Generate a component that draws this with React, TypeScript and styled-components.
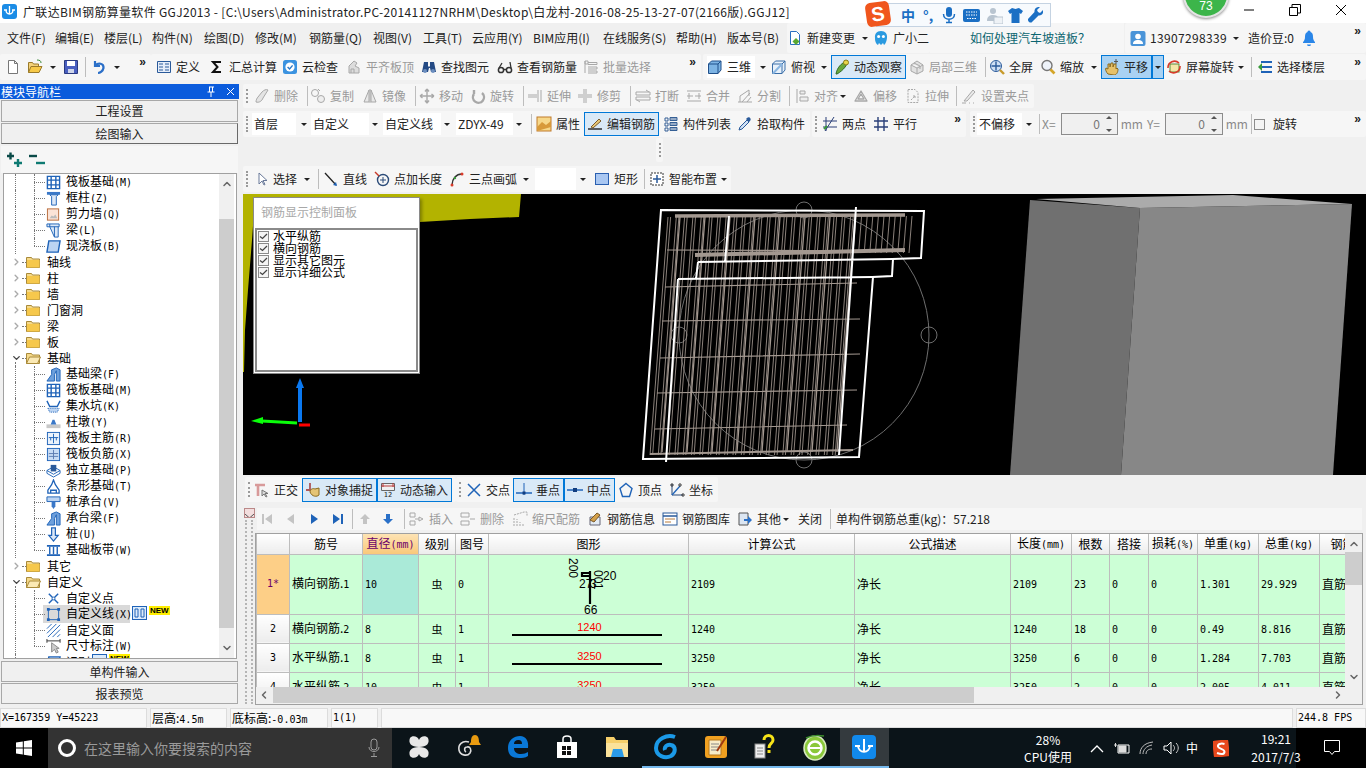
import React from "react";
import styled, { createGlobalStyle } from "styled-components";
import { ChevronUp, ChevronDown, ChevronLeft, ChevronRight } from "lucide-react";

const CJK = `"Noto Sans CJK SC", "Noto Sans", sans-serif`;
const MONO = `"DejaVu Sans Mono", "Liberation Mono", monospace`;

const Global = createGlobalStyle`
  html, body { margin: 0; padding: 0; overflow: hidden; background: #f0f0f0; }
  * { box-sizing: border-box; }
  #root { width: 1366px; height: 768px; }
`;

const B = "#1f63b8";
const G = "#a8a8a8";
const icons: Record<string, React.ReactNode> = {
  new: <path d="M3.5 1.5h6l3 3v10h-9z M9.5 1.5v3h3" fill="#fff" stroke="#777" />,
  open: <><path d="M1.5 13.5v-10h4l1 1.5h5v2" fill="#f4d27a" stroke="#9a7a2a" /><path d="M1.5 13.5l2.5-6h11l-3 6z" fill="#f7c948" stroke="#9a7a2a" /><path d="M10 1c3 0 4 1 4 3" fill="none" stroke="#3a8a3a" /></>,
  save: <><path d="M1.5 1.5h13v13h-13z" fill="#4a5fc0" stroke="#2a3a80" /><path d="M4 2h8v5H4z" fill="#fff" /><path d="M5 10h6v4H5z" fill="#cfd6ea" /></>,
  undo: <path d="M4 2v5h5M4.5 6.5C7 3.5 13 4 12.5 9 12 12 9 14 7 14" fill="none" stroke="#2b6fc8" strokeWidth="2.2" />,
  def: <><path d="M1.5 2.5h13v11h-13z" fill="#e6eefa" stroke="#2a5a9a" /><path d="M3 5h4M3 8h4M3 11h4M9 5h4M9 8h4M9 11h4" stroke="#2a5a9a" /></>,
  sigma: <path d="M12 3H4l4.5 5L4 13h8" fill="none" stroke="#111" strokeWidth="2" />,
  cloud: <><rect x="1" y="1" width="14" height="14" rx="2.5" fill="#3b93e0" /><circle cx="8" cy="8" r="4.6" fill="#fff" /><path d="M5.6 8l2 2 3-3.6" fill="none" stroke="#2a78c8" strokeWidth="1.4" /></>,
  flush: <path d="M3 14V7l5-5 3 2-2 3 4 2v5zM5 14v-4h3v4" fill="#ddd" stroke={G} />,
  find: <><path d="M3 3h4v4l1 1 1-1V3h4l2 10h-5l-1-4-1 0-1 4H1z" fill="#244a84" /><circle cx="4" cy="12" r="2" fill="#6d8fc0" /><circle cx="12" cy="12" r="2" fill="#6d8fc0" /></>,
  view: <><circle cx="4" cy="11" r="2.6" fill="none" stroke="#333" strokeWidth="1.5" /><circle cx="12" cy="11" r="2.6" fill="none" stroke="#333" strokeWidth="1.5" /><path d="M6 10.5h4M2 9l3-5M14 9l-1-6" stroke="#333" strokeWidth="1.3" fill="none" /></>,
  batch: <path d="M2 2h3v3H2zM2 2v12M5 3.5h9v2H5M5 8h9v2H5M5 12h9v2H5" fill="none" stroke={G} />,
  cube: <><path d="M1.5 5l3-3h9.5v9l-3 3.5h-9.5z" fill="#7db4e4" stroke="#1f4f8a" /><path d="M1.5 5H11v9.5M11 5l3-3" fill="none" stroke="#1f4f8a" /></>,
  glass: <><path d="M1.5 5l3-3h9.5v9l-3 3.5h-9.5z" fill="#e8f1fa" stroke="#3a6ea8" /><path d="M1.5 5H11v9.5M11 5l3-3" fill="none" stroke="#3a6ea8" /><path d="M2 14.5L11 5" stroke="#8ab6e2" strokeWidth="2" /></>,
  orbit: <><path d="M2 15C3 9 7 4 13 2c1 3-3 9-10 13z" fill="#6aa83c" stroke="#2f6b25" /><circle cx="12" cy="3.5" r="2.5" fill="#e8d64a" stroke="#8a7a1a" /></>,
  local: <path d="M2 6l6-4 6 4v6l-6 3-6-3zM2 6l6 3 6-3M8 9v6M5 4l6 3v3" fill="#e2e2e2" stroke={G} />,
  full: <><circle cx="7" cy="7" r="5.5" fill="#cfe0f5" stroke="#2a5a9a" /><path d="M7 2.5v9M2.5 7h9" stroke="#2a5a9a" strokeWidth="1.4" /><path d="M11 11l4 4" stroke="#c79a2a" strokeWidth="2.4" /></>,
  zoom: <><circle cx="7" cy="6.5" r="5" fill="#eef3fa" stroke="#777" strokeWidth="1.4" /><path d="M10.5 10.5l4 4" stroke="#d4a528" strokeWidth="2.6" /></>,
  pan: <><path d="M4 15c-2-2-3-5-2-6l2 1V5h2v3l1-4h2v4l1-3h2v5l1-1 1 1c0 4-2 6-4 6z" fill="#e6c16a" stroke="#8a6a20" /><path d="M12 0v5M10 2.5h4" stroke="#555" /></>,
  rotate: <><rect x="4" y="5" width="9" height="8" fill="#f5e6a8" stroke="#5a8a3a" /><path d="M2 9a6.5 6.5 0 0 1 11-5M14 7a6.5 6.5 0 0 1-11 5" fill="none" stroke="#d83a2a" strokeWidth="1.6" /></>,
  floor: <><path d="M4 3h11M4 8h11M4 13h11" stroke="#1f63b8" strokeWidth="2" /><path d="M1 8l4-4v8z" fill="#3a9a3a" /></>,
  docup: <><path d="M3.5 1.5h6l3 3v10h-9z" fill="#fff" stroke="#2a6fc0" /><path d="M9 8l3.5 3.5L9 15l-3.5-3.5z" fill="#5aa830" /></>,
  mascot: <><path d="M8 1c4.5 0 6.5 3 6 7-.3 3-1.5 6-3 7l-1-2-2 2-2-2-1 2C3 14 1.800 11 2 8c-.4-4 1.500-7 6-7z" fill="#2a9ae0" /><circle cx="5.600" cy="6.500" r="1.500" fill="#fff" /><circle cx="10.400" cy="6.500" r="1.500" fill="#fff" /></>,
  user: <><rect x="0.500" y="1" width="15" height="15" rx="2" fill="#4a94d8" /><circle cx="8" cy="6.500" r="2.800" fill="#fff" /><path d="M3 14c0-3 2-4 5-4s5 1 5 4z" fill="#fff" /></>,
  bell: <path d="M8 0.500c1 0 1.500.8 1.500 1.500 2 .8 2.500 2.500 2.500 5 0 2.500 1 4 2 5v1H2v-1c1-1 2-2.500 2-5 0-2.500.5-4.200 2.500-5C6.500 1.300 7 .5 8 .5zM6 14.500h4c0 1-1 1.500-2 1.500s-2-.5-2-1.500z" fill="#2a86e8" />,
  eraser: <><path d="M2 14c3 1 6-1 7-4l5-8c-2-1-4 0-6 2L4 9c-1 1-2 3-2 5z" fill="#e4e4e4" stroke={G} /></>,
  copy: <><circle cx="5" cy="5" r="3.500" fill="none" stroke={G} /><circle cx="11" cy="11" r="3.500" fill="#eee" stroke={G} /><path d="M8 1l2 2" stroke={G} /></>,
  mirror: <path d="M7 2v12H2zM9 2v12h5zM8 1v14" fill="#e8e8e8" stroke={G} />,
  move: <path d="M8 1v14M1 8h14M8 1L6 3.500M8 1l2 2.500M8 15l-2-2.500M8 15l2-2.500M1 8l2.500-2M1 8l2.500 2M15 8l-2.500-2M15 8l-2.500 2" fill="none" stroke={G} strokeWidth="1.400" />,
  spin: <path d="M4 2v4M12 5a5.500 5.500 0 1 1-8 1" fill="none" stroke={G} strokeWidth="2.400" />,
  extend: <path d="M14 2v12M11 2v12M1 7h9M1 9h9" fill="none" stroke={G} />,
  trim: <path d="M7 1v14M9 1v14M1 7h5M10 7h5M1 9h5M10 9h5" fill="none" stroke={G} />,
  cut: <path d="M1 4h14v3H1zM1 9h14v3H1zM11 2l3 2M5 14l-3-2" fill="none" stroke={G} />,
  merge: <path d="M1 3h14M1 13h14M1 8h6M9 8h6M3 5v6M13 5v6" fill="none" stroke={G} />,
  split: <path d="M3 14V8l9-6v6M1 14h14M5 14l8-9M10 14l4-5" fill="none" stroke={G} />,
  align: <path d="M3 1v14M6 3h5v3H6zM6 9h8v4H6z" fill="#eee" stroke={G} />,
  offset: <path d="M2 13L8 3l6 10zM5 11l3-5 3 5z" fill="none" stroke={G} strokeWidth="1.300" strokeLinejoin="round" />,
  stretch: <path d="M3 1.500h7l3 3v10H3zM6 12l4-4M10 8v3M10 8H7" fill="none" stroke={G} strokeDasharray="2 1" />,
  grip: <path d="M3 13L12 2l2 2-8 9zM1 15h4M8 15h1M12 15h1" fill="#eaeaea" stroke={G} />,
  prop: <><rect x="1" y="1" width="14" height="14" fill="#f7d88a" stroke="#c07a2a" /><path d="M1 11l5-5 4 3 5-4v6l-14 4z" fill="#d89a3a" /></>,
  edit: <><path d="M1 13h14" stroke="#222" strokeWidth="1.400" /><path d="M4 11l8-8 2 2-8 7z" fill="#e8c878" stroke="#7a5a2a" /></>,
  list: <path d="M2 2h3v3H2zM2 7h3v3H2zM2 12h3v3H2zM7 3h7M7 8h7M7 13h7M7 1.500h7v3H7zM7 6.500h7v3H7zM7 11.500h7v3H7z" fill="none" stroke="#355f95" />,
  pick: <><path d="M2 14l1-3 7-7 2 2-7 7z" fill="#cfe0f5" stroke="#2a5a9a" /><path d="M9 3l1-1c2-2 5 1 3 3l-1 1z" fill="#2a5a9a" /></>,
  twopt: <><path d="M4 1v14M12 1L3 15M1 5h14M1 11h14" stroke="#2a3f78" /><path d="M2 13l3-3" stroke="#3a9a3a" strokeWidth="2" /></>,
  para: <path d="M5 1v14M11 1v14M1 5h14M1 11h14" stroke="#2a3f78" strokeWidth="1.400" />,
  cursor: <path d="M6 2v11l3-3 2 4 1-.5-2-4h4z" fill="#fff" stroke="#6a7a9a" />,
  line: <><path d="M2 2l11 12" stroke="#222" strokeWidth="1.300" /><path d="M14 15l-4-1 3-3z" fill="#1f63b8" /></>,
  plen: <><circle cx="9" cy="9" r="5.500" fill="none" stroke="#2a4a78" strokeWidth="1.400" /><path d="M9 6v6M6 9h6" stroke="#2a4a78" /><path d="M1 1l4 4" stroke="#c83a2a" strokeWidth="1.400" /></>,
  arc: <><path d="M3 14C3 8 7 3 13 3" fill="none" stroke="#333" strokeWidth="1.400" /><circle cx="3" cy="14" r="1.500" fill="#d83a2a" /><circle cx="13" cy="3" r="1.500" fill="#d83a2a" /><circle cx="6" cy="7" r="1.200" fill="#3a9a3a" /></>,
  rect: <rect x="1.500" y="2.500" width="13" height="11" fill="#a9c7f2" stroke="#2a5fb0" />,
  smart: <><rect x="2" y="2" width="12" height="12" fill="#fff" stroke="#333" strokeDasharray="2 1" /><path d="M8 4v8M4 8h8" stroke="#2a5a9a" strokeWidth="1.500" /></>,
  ortho: <><path d="M1 3h10M4 3v11" stroke="#d89a9a" strokeWidth="2.600" /><path d="M8 8v6l2-2 2 3 1-.5-2-3h3z" fill="#ddd" stroke="#777" /></>,
  snap: <><path d="M1 8h5M5 1v6" stroke="#a02a2a" strokeWidth="1.400" /><path d="M5 10c0-3 3-4 5-3l4-1v7c-2 2-7 2-9-3z" fill="#e4c476" stroke="#8a6a20" /></>,
  dyn: <><path d="M1.500 1.500h13v7h-13z" fill="#f0f0f0" stroke="#666" /><path d="M1 4h14M3 1v4M13 1v4" stroke="#b83a3a" /><text x="8" y="15" fontSize="7" textAnchor="middle" fontFamily={MONO} fill="#222">12</text></>,
  cross: <path d="M2 2l12 12M14 2L2 14" stroke="#1f63b8" strokeWidth="1.500" />,
  perp: <><path d="M0 11h16" stroke="#1f63b8" strokeWidth="1.500" /><path d="M8 1v12" stroke="#1f63b8" /><rect x="6.500" y="9.500" width="3" height="3" fill="#123e80" /></>,
  mid: <><path d="M0 8h16" stroke="#1f63b8" strokeWidth="1.500" /><rect x="6" y="6" width="4" height="4" fill="#123e80" /></>,
  apex: <path d="M8 1.500l6 5-2.500 8h-7L2 6.500z" fill="none" stroke="#1f63b8" strokeWidth="1.400" />,
  coord: <><path d="M3 2v11h11" fill="none" stroke="#2a4a78" /><path d="M3 13L11 4" stroke="#1f63b8" strokeWidth="1.300" /><circle cx="3" cy="3" r="1.200" fill="none" stroke="#333" /><circle cx="11" cy="3" r="1.200" fill="none" stroke="#333" /><circle cx="14" cy="13" r="1.200" fill="none" stroke="#333" /></>,
  first: <path d="M3 3h2v10H3zM13 3v10L6 8z" fill="#c4c4c4" />,
  prev: <path d="M11 3v10L4 8z" fill="#c4c4c4" />,
  next: <path d="M5 3v10l7-5z" fill="#1f63b8" />,
  last: <path d="M3 3v10l7-5zM11 3h2v10h-2z" fill="#1f63b8" />,
  up: <path d="M8 3l5 5h-3v5H6V8H3z" fill="#c4c4c4" />,
  down: <path d="M8 13l5-5h-3V3H6v5H3z" fill="#2a70c8" />,
  ins: <path d="M1 2h5v4H1zM1 10h5v4H1zM6 8h4v-2l4 2-4 2V8" fill="none" stroke={G} />,
  del: <path d="M1 2h8v4H1zM1 10h8v4H1zM10 8h5" fill="none" stroke={G} />,
  scale: <path d="M2 15V6M5 15V8M8 15v-4M11 15v-2M2 4l10-3h3v4" fill="none" stroke={G} strokeDasharray="2 1" />,
  info: <><path d="M3 14h10V6H3z" fill="#e4ecf5" stroke="#667" /><path d="M3 9l7-7 3 2-6 7z" fill="#d4a04a" stroke="#7a5a2a" /></>,
  lib: <><rect x="1" y="2" width="14" height="12" fill="#fff" stroke="#2a5a9a" /><path d="M1 5h14" stroke="#2a5a9a" strokeWidth="1.500" /><path d="M3 8h10M3 11h6" stroke="#b87a3a" /></>,
  other: <><path d="M2 2h9v12H2z" fill="#dce6f2" stroke="#555" /><path d="M7 8h4V5l4 4-4 4v-3H7z" fill="#2a70c8" /></>,
  raft: <><path d="M1.500 1.500h13v13h-13z" fill="#fff" stroke={B} strokeWidth="1.500" /><path d="M5.500 2v12M10.500 2v12M2 5.500h12M2 10.500h12" stroke={B} strokeWidth="1.500" /></>,
  col: <><path d="M1 1h14v3H1z" fill="#3a78c8" /><path d="M4 4l2 2v9h5V6l2-2z" fill="#dce8f7" stroke={B} /></>,
  wall: <><rect x="1.500" y="2" width="12" height="12" fill="#fbe3d6" stroke="#b86a3a" /><path d="M4 12l2-3 2 1 2-2 2 4z" fill="#bbb" /></>,
  beam: <><path d="M1 1h13v3H1zM4 4l5 11h4V4" fill="#dce8f7" stroke={B} /><path d="M9 15V4M4 1v3" stroke={B} /></>,
  slab: <path d="M3 2h12l-2 12H1z" fill="#bcd4f2" stroke={B} strokeWidth="1.500" />,
  fbeam: <path d="M1 15l5-7V3l5-2 4 2v12H11V4L9 8v7z" fill="#6ea0dc" stroke={B} />,
  pit: <><path d="M1 2l3 6h8l3-6" fill="none" stroke={B} strokeWidth="1.500" /><path d="M2 10h12l-2 4H4z" fill="#bcd4f2" stroke={B} strokeDasharray="1 1" /></>,
  pier: <><rect x="0.500" y="10" width="15" height="4" fill="#c8c8c8" /><path d="M5 10l2-5h2l2 5z" fill="#3a78c8" /></>,
  rmain: <><rect x="1.500" y="1.500" width="13" height="13" fill="#eaf2fb" stroke={B} /><path d="M8 3v10M3 7h10M5 7v3M11 7v3" stroke={B} /></>,
  rneg: <><rect x="1.500" y="1.500" width="13" height="13" fill="#c8dcf5" stroke={B} /><path d="M8 3v10M3 7h10M3 10h10" stroke="#5a7ab0" /></>,
  iso: <><path d="M1 8l7-4 7 4-7 4z M1 8v3l7 4 7-4V8" fill="#fff" stroke={B} /><path d="M5 2h6v7H5z" fill="#2a5a9a" /></>,
  strip: <path d="M8 1l2 5 4 6v3H2v-3l4-6zM5 15v-3h6v3" fill="#fff" stroke={B} strokeWidth="1.400" />,
  cap: <><path d="M1 2h14v5H1z" fill="#bcd4f2" stroke={B} /><path d="M6 7h4v5l-2 3-2-3z" fill="#3a78c8" /></>,
  pile: <path d="M6 1h4v8h3l-5 6-5-6h3z" fill="#dce8f7" stroke={B} strokeWidth="1.300" />,
  band: <><path d="M1 3h14M1 13h14" stroke={B} strokeWidth="1.800" /><path d="M4 4v8M8 4v8M12 4v8" stroke={B} strokeWidth="1.500" /></>,
  cpt: <><path d="M3 3l10 10M13 3L3 13" stroke={B} strokeWidth="1.500" /><circle cx="8" cy="8" r="1.500" fill="#fff" stroke={B} /></>,
  cln: <><rect x="2.500" y="2.500" width="11" height="11" fill="none" stroke={B} /><path d="M1 1h3v3H1zM12 1h3v3h-3zM1 12h3v3H1zM12 12h3v3h-3z" fill={B} /></>,
  cfc: <path d="M1 6l5-5M1 11L11 1M2 15L15 2M7 15l8-8M12 15l3-3" stroke={B} />,
  dim: <><path d="M1 2h14M1 0v4M15 0v4" stroke="#333" /><path d="M6 4v10l3-3 2 4 2-1-2-4h3z" fill="#ccc" stroke="#888" /></>,
};

const Svg = styled.svg<{ $s: number }>`
  width: ${(p) => p.$s}px;
  height: ${(p) => p.$s}px;
  flex: none;
  display: block;
`;
const Ico = ({ n, s = 16 }: { n: string; s?: number }) => (
  <Svg $s={s} viewBox="0 0 16 16">{icons[n]}</Svg>
);

const Shell = styled.div`
  width: 1366px;
  height: 768px;
  display: flex;
  flex-direction: column;
  font: 12px/16px ${CJK};
  color: #222;
  background: #f0f0f0;
  overflow: hidden;
`;
const TitleBar = styled.header`
  position: relative;
  z-index: 3;
  height: 23px;
  flex: none;
  background: #fff;
  display: flex;
  align-items: center;
  padding-left: 2px;
`;
const AppGlyph = styled.div`
  width: 15px;
  height: 15px;
  border-radius: 3px;
  background: #1b8ce6;
  display: flex;
  align-items: center;
  justify-content: center;
  margin-right: 6px;
`;
const TitleText = styled.div`
  white-space: nowrap;
  color: #222;
  letter-spacing: 0.32px;
`;
const WinBtn = styled.div<{ $x: number }>`
  position: absolute;
  top: 0;
  left: ${(p) => p.$x}px;
  width: 24px;
  height: 20px;
  display: flex;
  align-items: center;
  justify-content: center;
`;
const Score = styled.div`
  position: absolute;
  left: 1183px;
  top: -28px;
  width: 46px;
  height: 46px;
  border-radius: 50%;
  background: #3cb54a;
  border: 2px solid #e4e4e4;
  box-shadow: 0 1px 3px rgba(0, 0, 0, 0.45);
  color: #fff;
  display: flex;
  align-items: flex-end;
  justify-content: center;
  padding-bottom: 3px;
  font: 12px/14px "Liberation Sans", sans-serif;
`;
const ImeBar = styled.div`
  position: absolute;
  left: 876px;
  top: 3px;
  width: 175px;
  height: 24px;
  background: #f7fafd;
  border: 1px solid #c5d3e2;
  z-index: 5;
  display: flex;
  align-items: center;
  padding-left: 24px;
  color: #1b6fc4;
`;
const ImeLogo = styled.div`
  position: absolute;
  left: 866px;
  top: 2px;
  width: 24px;
  height: 24px;
  transform: rotate(-8deg);
  background: #f0561d;
  border-radius: 5px;
  z-index: 6;
  color: #fff;
  font: bold 20px/24px "Liberation Sans", sans-serif;
  text-align: center;
`;
const ImeZh = styled.span`
  font: bold 14px/16px ${CJK};
`;
const Row = styled.div<{ $h: number; $pt?: number }>`
  height: ${(p) => p.$h}px;
  padding-top: ${(p) => p.$pt ?? 0}px;
  flex: none;
  display: flex;
  align-items: flex-start;
`;
const MenuItem = styled.div<{ $w: number }>`
  width: ${(p) => p.$w}px;
  flex: none;
  white-space: nowrap;
  line-height: 30px;
`;
const Strip = styled.div<{ $w?: number; $h?: number; $ml?: number }>`
  width: ${(p) => (p.$w ? `${p.$w}px` : "auto")};
  ${(p) => (p.$w ? "" : "flex: 1;")}
  height: ${(p) => p.$h ?? 26}px;
  margin-left: ${(p) => p.$ml ?? 0}px;
  flex-shrink: 0;
  background: #f6f6f6;
  border-radius: 2px;
  display: flex;
  align-items: center;
`;
const Handle = styled.div<{ $w: number }>`
  width: ${(p) => p.$w}px;
  height: 100%;
  flex: none;
  position: relative;
  &::after {
    content: "";
    position: absolute;
    left: 3px;
    top: 5px;
    bottom: 5px;
    border-left: 2px dotted #9a9a9a;
  }
`;
const ToolBox = styled.div<{ $w: number; $on?: number; $off?: boolean; $white?: boolean }>`
  width: ${(p) => p.$w}px;
  height: ${(p) => (p.$on ? 24 : 22)}px;
  flex: none;
  display: flex;
  align-items: center;
  gap: 4px;
  white-space: nowrap;
  color: ${(p) => (p.$off ? "#9a9a9a" : "#222")};
  padding-left: ${(p) => (p.$on ? 2 : 0)}px;
  border: ${(p) => (p.$on ? "1px solid #0078d7" : "none")};
  background: ${(p) =>
    p.$on === 2 ? "#a9d2f3" : p.$on === 1 ? "#d9e9f7" : p.$white ? "#fff" : "transparent"};
`;
const Tool = ({ i, t, w, on, off, white }: { i?: string; t?: string; w: number; on?: number; off?: boolean; white?: boolean }) => (
  <ToolBox $w={w} $on={on} $off={off} $white={white}>
    {i && <Ico n={i} />}
    {t && <span>{t}</span>}
  </ToolBox>
);
const Arrow = styled.div<{ $w: number; $on?: boolean }>`
  width: ${(p) => p.$w}px;
  height: ${(p) => (p.$on ? 24 : 22)}px;
  flex: none;
  display: flex;
  align-items: center;
  justify-content: center;
  border: ${(p) => (p.$on ? "1px solid #0078d7" : "none")};
  background: ${(p) => (p.$on ? "#a9d2f3" : "transparent")};
  &::after {
    content: "";
    border: 3px solid transparent;
    border-top: 3px solid #222;
    border-bottom: none;
  }
`;
const Sep = styled.div<{ $w: number }>`
  width: ${(p) => p.$w}px;
  height: 20px;
  flex: none;
  position: relative;
  &::after {
    content: "";
    position: absolute;
    left: 50%;
    top: 0;
    bottom: 0;
    width: 1px;
    background: #bdbdbd;
  }
`;
const Gap = styled.div<{ $w: number }>`
  width: ${(p) => p.$w}px;
  flex: none;
`;
const More = styled.div`
  margin-left: auto;
  padding-right: 5px;
  align-self: flex-start;
  font: bold 12px/16px "Liberation Sans", sans-serif;
`;
const Combo = styled.div<{ $w: number }>`
  width: ${(p) => p.$w}px;
  height: 22px;
  flex: none;
  background: #fff;
  padding-left: 2px;
  line-height: 22px;
  white-space: nowrap;
`;
const Txt = styled.div<{ $w: number; $off?: boolean; $wide?: boolean }>`
  width: ${(p) => p.$w}px;
  flex: none;
  white-space: nowrap;
  color: ${(p) => (p.$off ? "#8a8a8a" : "#222")};
`;
const Phone = styled.span`
  letter-spacing: 0.35px;
`;
const Ad = styled.div`
  width: 194px;
  height: 30px;
  flex: none;
  background: #f6f6f6;
  color: #0b6570;
  text-align: center;
  line-height: 30px;
  padding-left: 6px;
`;
const SpinInput = styled.div<{ $w: number }>`
  width: ${(p) => p.$w}px;
  height: 22px;
  flex: none;
  background: #f0f0f0;
  border: 1px solid #8c8c8c;
  color: #777;
  display: flex;
  align-items: center;
  justify-content: flex-end;
  padding-right: 17px;
  position: relative;
  &::before, &::after {
    content: "";
    position: absolute;
    right: 5px;
    border: 3px solid transparent;
  }
  &::before { top: 2px; border-top: none; border-bottom: 3px solid #555; }
  &::after { bottom: 2px; border-bottom: none; border-top: 3px solid #555; }
`;
const Check = styled.div`
  width: 11px;
  height: 11px;
  flex: none;
  margin: 0 8px 0 1px;
  border: 1px solid #8c8c8c;
  background: #f4f4f4;
`;
const Body = styled.div`
  height: 624px;
  flex: none;
  display: flex;
`;
const Nav = styled.aside`
  width: 239px;
  flex: none;
  display: flex;
  flex-direction: column;
  margin-right: 4px;
  padding-bottom: 3px;
`;
const NavHead = styled.div`
  height: 15px;
  flex: none;
  background: #0a5bdc;
  color: #fff;
  display: flex;
  align-items: center;
  padding: 0 4px 0 1px;
  font-size: 12px;
  line-height: 15px;
  margin-bottom: 1px;
`;
const PinIcon = styled.svg`
  margin-left: auto;
`;
const CloseIcon = styled.svg`
  margin-left: 10px;
`;
const NavBtn = styled.div<{ $dark?: boolean; $h: number }>`
  height: ${(p) => p.$h}px;
  flex: none;
  margin: 0 1px 1px;
  background: #f0f0f0;
  border: 1px solid #a8a8a8;
  border-right-color: ${(p) => (p.$dark ? "#696969" : "#a8a8a8")};
  border-bottom-color: ${(p) => (p.$dark ? "#696969" : "#a8a8a8")};
  text-align: center;
  font-size: 12px;
  line-height: ${(p) => p.$h - 2}px;
`;
const TreeTools = styled.div`
  height: 27px;
  flex: none;
  margin: 1px 1px 0;
  background: #f6f6f6;
  display: flex;
  align-items: center;
  padding-left: 5px;
  gap: 6px;
`;
const TreeBox = styled.div`
  flex: 1;
  min-height: 0;
  margin: 0 2px 2px 3px;
  border: 1px solid #a0a0a0;
  background: #fff;
  display: flex;
  padding-right: 2px;
  overflow: hidden;
`;
const TreeList = styled.div`
  flex: 1;
  padding-top: 0;
`;
const TreeRow = styled.div<{ $l: number }>`
  position: relative;
  height: 16px;
  display: flex;
  align-items: center;
  padding-left: ${(p) => (p.$l ? 42 : 7)}px;
  color: #000;
  white-space: nowrap;
`;
const GuideV = styled.i<{ $x: number; $short?: boolean; $stub?: boolean }>`
  position: absolute;
  left: ${(p) => p.$x}px;
  top: ${(p) => (p.$stub ? 12 : 0)}px;
  height: ${(p) => (p.$stub ? 4 : p.$short ? 8 : 16)}px;
  border-left: 1px dotted #777;
`;
const GuideH = styled.i<{ $x: number; $w: number }>`
  position: absolute;
  left: ${(p) => p.$x}px;
  top: 8px;
  width: ${(p) => p.$w}px;
  border-top: 1px dotted #777;
`;
const Chev = styled.span`
  width: 11px;
  flex: none;
  display: flex;
  margin-right: 4px;
`;
const FolderIcon = styled.span`
  width: 15px;
  flex: none;
  margin-right: 6px;
  display: flex;
`;
const TreeName = styled.span<{ $sel?: boolean }>`
  margin-left: ${(p) => (p.$sel ? 0 : 5)}px;
`;
const Hot = styled.span`
  font: 10px/16px ${MONO};
`;
const SelWrap = styled.span`
  display: flex;
  align-items: center;
  gap: 5px;
  background: #d9d9d9;
  margin-left: -3px;
  padding-left: 3px;
  width: 87px;
  flex: none;
`;
const Badge = styled.span`
  display: flex;
  align-items: center;
  gap: 2px;
  margin: -3px 0 0 2px;
`;
const NewTag = styled.span`
  background: #ffee00;
  color: #000;
  font: bold 8px/9px "Liberation Sans", sans-serif;
  padding: 0 1px;
  margin-top: -5px;
`;
const VBar = styled.div<{ $w: number }>`
  width: ${(p) => p.$w}px;
  flex: none;
  display: flex;
  flex-direction: column;
  background: #f0f0f0;
  color: #666;
`;
const VEnd = styled.div<{ $h?: number; $bottom?: boolean }>`
  ${(p) => (p.$h ? `height:${p.$h}px;flex:none;` : "flex:1;")}
  display: flex;
  justify-content: center;
  align-items: ${(p) => (p.$bottom ? "flex-end" : "flex-start")};
  padding: 4px 0;
`;
const VThumb = styled.div<{ $h: number }>`
  height: ${(p) => p.$h}px;
  flex: none;
  background: #cdcdcd;
`;
const Right = styled.div`
  flex: 1;
  min-width: 0;
  display: flex;
  flex-direction: column;
`;
const Canvas = styled.div`
  position: relative;
  height: 281px;
  flex: none;
  background: #000;
  overflow: hidden;
`;
const Drawing = styled.svg`
  position: absolute;
  inset: 0;
  width: 1123px;
  height: 281px;
`;
const Panel = styled.div`
  position: absolute;
  left: 10px;
  top: 3px;
  width: 167px;
  height: 177px;
  background: #fff;
  border: 1px solid #8a8a8a;
  box-shadow: 2px 2px 3px rgba(0, 0, 0, 0.3);
  display: flex;
  flex-direction: column;
`;
const PanelTitle = styled.div`
  height: 30px;
  flex: none;
  padding: 6px 0 0 7px;
  color: #a8a8a8;
`;
const PanelList = styled.div`
  flex: 1;
  margin: 0 1px 1px;
  border: 2px solid #8a8a8a;
  padding: 0 0 0 1px;
`;
const PanelItem = styled.div`
  height: 12px;
  display: flex;
  align-items: center;
  gap: 4px;
  color: #000;
  line-height: 12px;
  white-space: nowrap;
`;
const PanelCheck = styled.span`
  width: 11px;
  height: 11px;
  flex: none;
  border: 1px solid #8a8a8a;
  background: #f4f4f4;
  display: flex;
`;
const Lower = styled.div`
  flex: 1;
  min-height: 0;
  display: flex;
`;
const Gutter = styled.div`
  width: 12px;
  flex: none;
  display: flex;
  flex-direction: column;
  align-items: center;
  padding-top: 3px;
`;
const Dots = styled.div`
  flex: 1;
  width: 8px;
  margin-top: 2px;
  margin-bottom: 4px;
  border-left: 2px dotted #b5b5b5;
  border-right: 2px dotted #b5b5b5;
`;
const XBox = styled.div`
  width: 11px;
  height: 10px;
  background: #f3dede;
  border: 1px solid #b88;
  position: relative;
  overflow: hidden;
`;
const LowerMain = styled.div`
  width: 1108px;
  flex: none;
  display: flex;
  flex-direction: column;
`;
const RebarBar = styled.div`
  height: 22px;
  flex: none;
  margin: 3px 1px 3px 2px;
  background: #f6f6f6;
  display: flex;
  align-items: center;
  padding-left: 2px;
`;
const Sheet = styled.div`
  height: 172px;
  flex: none;
  border: 1px solid #a0a0a0;
  display: flex;
  flex-direction: column;
  background: #f0f0f0;
`;
const SheetTop = styled.div`
  height: 153px;
  flex: none;
  display: flex;
`;
const Clip = styled.div`
  flex: 1;
  min-width: 0;
  overflow: hidden;
`;
const Tbl = styled.table`
  table-layout: fixed;
  border-collapse: collapse;
  width: 1133px;
  font: 12px/16px ${CJK};
  color: #000;
`;
const Th = styled.th<{ $hot?: boolean }>`
  height: 20px;
  padding: 0;
  font-weight: 400;
  white-space: nowrap;
  overflow: hidden;
  border: 1px solid #bdbdbd;
  border-top: none;
  color: ${(p) => (p.$hot ? "#6a006a" : "#000")};
  background: ${(p) =>
    p.$hot ? "linear-gradient(#fde3b4,#f9c87a)" : "linear-gradient(#fff,#ececec)"};
`;
const RowHead = styled.td<{ $cur?: boolean }>`
  padding: 0;
  text-align: center;
  border: 1px solid #bdbdbd;
  font: 10px/16px ${MONO};
  color: ${(p) => (p.$cur ? "#6a006a" : "#000")};
  background: ${(p) => (p.$cur ? "#fdcf87" : "linear-gradient(#fff,#ececec)")};
`;
const Td = styled.td<{ $sel?: boolean; $mark?: boolean; $c?: boolean }>`
  padding: 0 0 0 2px;
  white-space: nowrap;
  overflow: hidden;
  text-align: ${(p) => (p.$c ? "center" : "left")};
  border: 1px solid #bdbdbd;
  ${(p) => (p.$mark ? "border-left: 1px solid #000;" : "")}
  background: ${(p) => (p.$sel ? "#aaead8" : "#ccffd6")};
  ${(p) => (p.$c ? "font-size: 11px; padding-left: 0;" : "")}
`;
const Num = styled.span`
  font: 10px/16px ${MONO};
`;
const Tr = styled.tr<{ $h: number }>`
  height: ${(p) => p.$h}px;
`;
const ShapeSvg = styled.svg`
  display: block;
  margin-left: -2px;
  width: 200px;
  height: 59px;
`;
const Shape = styled.div`
  position: relative;
  height: 28px;
  margin-left: -2px;
  padding-right: 4px;
  display: flex;
  flex-direction: column;
  align-items: center;
`;
const ShapeVal = styled.span`
  color: #f00;
  font: 11px/14px "Liberation Sans", sans-serif;
  margin: 5px 0 0 6px;
`;
const ShapeBar = styled.span`
  width: 150px;
  height: 2px;
  background: #000;
`;
const HBar = styled.div`
  height: 16px;
  flex: none;
  display: flex;
  align-items: center;
  padding: 0 0 0 17px;
  color: #666;
  position: relative;
`;
const HThumb = styled.div`
  width: 701px;
  height: 16px;
  background: #cdcdcd;
`;
const HEnd = styled.div<{ $right?: boolean }>`
  position: absolute;
  top: 2px;
  ${(p) => (p.$right ? "right: 18px;" : "left: 2px;")}
  display: flex;
`;
const Status = styled.footer`
  height: 20px;
  flex: none;
  display: flex;
  gap: 3px;
  background: #f0f0f0;
`;
const StatusCell = styled.div<{ $w?: number }>`
  ${(p) => (p.$w ? `width:${p.$w}px;flex:none;` : "flex:1;")}
  border: 1px solid #dcdcdc;
  background: #f8f8f8;
  padding-left: 1px;
  font: 10px/18px ${MONO};
  color: #000;
  white-space: nowrap;
`;
const StatusCn = styled.span`
  font: 12px/18px ${CJK};
`;
const Taskbar = styled.div`
  height: 40px;
  flex: none;
  display: flex;
  align-items: stretch;
  background: linear-gradient(to right, #0b1419 1296px, #000 1296px);
  color: #fff;
`;
const Start = styled.div`
  width: 48px;
  flex: none;
  background: #000;
  display: flex;
  align-items: center;
  justify-content: center;
`;
const Search = styled.div`
  width: 344px;
  flex: none;
  background: #333;
  color: #9a9a9a;
  display: flex;
  align-items: center;
  font-size: 14px;
  padding: 0 12px 0 10px;
`;
const Cortana = styled.div`
  width: 18px;
  height: 18px;
  border: 3px solid #fff;
  border-radius: 50%;
  margin-right: 8px;
  flex: none;
`;
const Mic = styled.div`
  margin-left: auto;
  display: flex;
`;
const Apps = styled.div`
  display: flex;
  padding-left: 2px;
`;
const AppSlot = styled.div<{ $open?: boolean; $active?: boolean }>`
  width: 49.5px;
  flex: none;
  display: flex;
  align-items: center;
  justify-content: center;
  padding-bottom: 2px;
  background: ${(p) => (p.$active ? "#343a3e" : "transparent")};
  box-shadow: ${(p) => (p.$open ? "inset 0 -2px 0 #76b9ed" : "none")};
`;
const Tray = styled.div`
  position: relative;
  flex: 1;
`;
const CpuBlock = styled.div`
  position: absolute;
  left: 119px;
  top: 3px;
  width: 80px;
  text-align: center;
  line-height: 17px;
`;
const TrayIcon = styled.div<{ $x: number }>`
  position: absolute;
  left: ${(p) => p.$x}px;
  top: 10px;
  width: 20px;
  height: 20px;
  display: flex;
  align-items: center;
  justify-content: center;
`;
const Clock = styled.div`
  position: absolute;
  left: 359px;
  top: 2px;
  width: 56px;
  text-align: center;
  line-height: 18px;
  white-space: nowrap;
`;

const tree: { l: number; i?: string; t: string; k?: string; open?: boolean; last?: boolean; sel?: boolean }[] = [
  { l: 1, i: "raft", t: "筏板基础", k: "(M)" },
  { l: 1, i: "col", t: "框柱", k: "(Z)" },
  { l: 1, i: "wall", t: "剪力墙", k: "(Q)" },
  { l: 1, i: "beam", t: "梁", k: "(L)" },
  { l: 1, i: "slab", t: "现浇板", k: "(B)", last: true },
  { l: 0, t: "轴线" },
  { l: 0, t: "柱" },
  { l: 0, t: "墙" },
  { l: 0, t: "门窗洞" },
  { l: 0, t: "梁" },
  { l: 0, t: "板" },
  { l: 0, t: "基础", open: true },
  { l: 1, i: "fbeam", t: "基础梁", k: "(F)" },
  { l: 1, i: "raft", t: "筏板基础", k: "(M)" },
  { l: 1, i: "pit", t: "集水坑", k: "(K)" },
  { l: 1, i: "pier", t: "柱墩", k: "(Y)" },
  { l: 1, i: "rmain", t: "筏板主筋", k: "(R)" },
  { l: 1, i: "rneg", t: "筏板负筋", k: "(X)" },
  { l: 1, i: "iso", t: "独立基础", k: "(P)" },
  { l: 1, i: "strip", t: "条形基础", k: "(T)" },
  { l: 1, i: "cap", t: "桩承台", k: "(V)" },
  { l: 1, i: "fbeam", t: "承台梁", k: "(F)" },
  { l: 1, i: "pile", t: "桩", k: "(U)" },
  { l: 1, i: "band", t: "基础板带", k: "(W)", last: true },
  { l: 0, t: "其它" },
  { l: 0, t: "自定义", open: true },
  { l: 1, i: "cpt", t: "自定义点" },
  { l: 1, i: "cln", t: "自定义线", k: "(X)", sel: true },
  { l: 1, i: "cfc", t: "自定义面" },
  { l: 1, i: "dim", t: "尺寸标注", k: "(W)", last: true },
];

const Folder = ({ open }: { open?: boolean }) => (
  <svg width="15" height="14" viewBox="0 0 15 14">
    <path d="M0.5 12.5v-10h5l1 1.500h7v8.500z" fill="#f5d98a" stroke="#a98a3a" />
    {open ? (
      <path d="M0.5 12.500l3-6.500h11l-3 6.500z" fill="#fbe9b4" stroke="#a98a3a" />
    ) : (
      <path d="M1 5h12.500v7.500H1z" fill="#f6c84c" />
    )}
  </svg>
);

const colW = [33, 73, 56, 37, 33, 200, 166, 156, 61, 38, 39, 49, 61, 61, 70];
const heads = ["", "筋号", "", "级别", "图号", "图形", "计算公式", "公式描述", "", "根数", "搭接", "", "", "", "钢筋归类"];

const rows = [
  { n: "1*", name: "横向钢筋.", s: "1", d: "10", fig: "0", f: "2109", len: "2109", c: "23", w: "1.301", t: "29.929", h: 60 },
  { n: "2", name: "横向钢筋.", s: "2", d: "8", fig: "1", f: "1240", len: "1240", c: "18", w: "0.49", t: "8.816", h: 29 },
  { n: "3", name: "水平纵筋.", s: "1", d: "8", fig: "1", f: "3250", len: "3250", c: "6", w: "1.284", t: "7.703", h: 29 },
  { n: "4", name: "水平纵筋.", s: "2", d: "10", fig: "1", f: "3250", len: "3250", c: "2", w: "2.005", t: "4.011", h: 29 },
];

const vert: string[] = [];
for (let i = 0; i < 23; i++) {
  const x = 668 + i * 8.3;
  vert.push(`M${x} 217L${x - 18} 455`);
  vert.push(`M${x + 2.6} 217L${x - 15.4} 455`);
}
for (let i = 0; i < 11; i++) {
  const x = 856 + i * 5.6;
  vert.push(`M${x} 216L${x - 3} 253`);
}
const vertBold: string[] = [];
for (let i = 0; i < 8; i++) {
  const x = 680 + i * 25;
  vertBold.push(`M${x} 217L${x - 18} 452`);
}

export default function App() {
  return (
    <Shell>
      <Global />
      <TitleBar>
        <AppGlyph>
          <svg width="11" height="11" viewBox="0 0 11 11"><path d="M5.500 0v8M2 3.500c0 6 7 6 7 0M0 4h3M8 4h3" fill="none" stroke="#fff" strokeWidth="1.300" /></svg>
        </AppGlyph>
        <TitleText>广联达BIM钢筋算量软件 GGJ2013 - [C:\Users\Administrator.PC-20141127NRHM\Desktop\白龙村-2016-08-25-13-27-07(2166版).GGJ12]</TitleText>
        <Score>73</Score>
        <ImeLogo>S</ImeLogo>
        <ImeBar>
          <ImeZh>中</ImeZh>
          <Gap $w={8} />
          <ImeZh>°,</ImeZh>
          <Gap $w={9} />
          <svg width="14" height="18" viewBox="0 0 14 18"><rect x="4" y="1" width="6" height="10" rx="3" fill="#1b6fc4" /><path d="M1.500 8c0 7 11 7 11 0M7 13v3M4 16.500h6" fill="none" stroke="#1b6fc4" strokeWidth="1.500" /></svg>
          <Gap $w={7} />
          <svg width="17" height="13" viewBox="0 0 17 13"><rect width="17" height="13" rx="2" fill="#1b6fc4" /><path d="M3 3h11M3 6h11M4 9.500h9" stroke="#fff" strokeDasharray="1.500 1" /></svg>
          <Gap $w={6} />
          <svg width="17" height="17" viewBox="0 0 17 17"><circle cx="7" cy="4" r="3" fill="#b8c4d0" /><path d="M1 14c0-5 3-6 6-6s5 1 5 3v3z" fill="#b8c4d0" /><rect x="8" y="10" width="9" height="7" fill="#eef2f6" stroke="#b8c4d0" /></svg>
          <Gap $w={5} />
          <svg width="15" height="16" viewBox="0 0 15 16"><path d="M4 1l3.500 1L11 1l4 3-2 3-1.500-1v10h-8V6L2 7 0 4z" fill="#1b6fc4" /></svg>
          <Gap $w={5} />
          <svg width="15" height="16" viewBox="0 0 15 16"><path d="M15 3l-3 3-2-1-1-2 3-3C9 -.5 6 1.500 6.500 5L0 12c-.5 2 1.500 4 3.500 3.500l7-7C13 9 16 7 15 3z" fill="#1b6fc4" /></svg>
        </ImeBar>
        <WinBtn $x={1237}><svg width="12" height="12"><path d="M1 6h10" stroke="#000" /></svg></WinBtn>
        <WinBtn $x={1283}><svg width="12" height="12"><path d="M.5 3.500h8v8h-8zM3 3V.5h8.500V9H9" fill="#fff" stroke="#000" /></svg></WinBtn>
        <WinBtn $x={1329}><svg width="12" height="12"><path d="M1 1l10 10M11 1L1 11" stroke="#000" /></svg></WinBtn>
      </TitleBar>

      <Row $h={31}>
        <Gap $w={7} />
        {([["文件(F)", 48], ["编辑(E)", 49], ["楼层(L)", 48], ["构件(N)", 52], ["绘图(D)", 51], ["修改(M)", 54], ["钢筋量(Q)", 64], ["视图(V)", 50], ["工具(T)", 49], ["云应用(Y)", 61], ["BIM应用(I)", 70], ["在线服务(S)", 73], ["帮助(H)", 51], ["版本号(B)", 60]] as [string, number][]).map(([t, w]) => (
          <MenuItem key={t} $w={w}>{t}</MenuItem>
        ))}
        <Strip $w={143} $h={30}>
          <Tool i="docup" t="新建变更" w={70} />
          <Arrow $w={15} />
          <Gap $w={1} />
          <Tool i="mascot" t="广小二" w={57} />
        </Strip>
        <Ad>如何处理汽车坡道板？</Ad>
        <Strip $ml={1} $h={30}>
          <Gap $w={5} />
          <ToolBox $w={101}><Ico n="user" /><Phone>13907298339</Phone></ToolBox>
          <Arrow $w={10} />
          <Gap $w={7} />
          <Txt $w={50}>造价豆:0</Txt>
          <Gap $w={3} />
          <Ico n="bell" />
          <More>»</More>
        </Strip>
      </Row>

      <Row $h={30}>
        <Strip $w={151}>
          <Gap $w={5} />
          <Tool i="new" w={22} />
          <Tool i="open" w={21} />
          <Arrow $w={10} />
          <Gap $w={5} />
          <Tool i="save" w={20} />
          <Sep $w={4} />
          <Gap $w={4} />
          <Tool i="undo" w={20} />
          <Arrow $w={12} />
          <More>»</More>
        </Strip>
        <Strip $w={550}>
          <Gap $w={5} />
          <Tool i="def" t="定义" w={53} />
          <Tool i="sigma" t="汇总计算" w={73} />
          <Tool i="cloud" t="云检查" w={64} />
          <Tool i="flush" t="平齐板顶" w={75} off />
          <Tool i="find" t="查找图元" w={76} />
          <Tool i="view" t="查看钢筋量" w={86} />
          <Tool i="batch" t="批量选择" w={70} off />
          <More>»</More>
        </Strip>
        <Strip $ml={2}>
          <Gap $w={4} />
          <Tool i="cube" t="三维" w={48} white />
          <Arrow $w={16} />
          <Tool i="glass" t="俯视" w={46} />
          <Arrow $w={14} />
          <Tool i="orbit" t="动态观察" w={75} on={1} />
          <Gap $w={3} />
          <Tool i="local" t="局部三维" w={71} off />
          <Sep $w={9} />
          <Tool i="full" t="全屏" w={51} />
          <Tool i="zoom" t="缩放" w={46} />
          <Arrow $w={15} />
          <Tool i="pan" t="平移" w={51} on={2} />
          <Arrow $w={12} $on />
          <Gap $w={2} />
          <Tool i="rotate" t="屏幕旋转" w={70} />
          <Arrow $w={10} />
          <Sep $w={9} />
          <Gap $w={2} />
          <Tool i="floor" t="选择楼层" w={68} />
          <More>»</More>
        </Strip>
      </Row>

      <Body>
        <Nav>
          <NavHead>
            <span>模块导航栏</span>
            <PinIcon width="10" height="12" viewBox="0 0 10 12"><path d="M3 1h5M3.500 1v5M6.500 1v5M1.500 6h7M5 6v5" stroke="#fff" fill="none" /></PinIcon>
            <CloseIcon width="9" height="9" viewBox="0 0 9 9"><path d="M1 1l7 7M8 1L1 8" stroke="#fff" /></CloseIcon>
          </NavHead>
          <NavBtn $h={22}>工程设置</NavBtn>
          <NavBtn $h={21} $dark>绘图输入</NavBtn>
          <TreeTools>
            <svg width="17" height="17" viewBox="0 0 17 17"><path d="M1 5h7M4.500 1.500v7" stroke="#0a4a48" strokeWidth="2.400" /><path d="M8 12h8M12 8v8" stroke="#0e7a72" strokeWidth="2.400" /></svg>
            <svg width="17" height="17" viewBox="0 0 17 17"><path d="M0 5h8" stroke="#0a4a48" strokeWidth="2.400" /><path d="M7 12h9" stroke="#0e7a72" strokeWidth="2.400" /></svg>
          </TreeTools>
          <TreeBox>
            <TreeList>
              {tree.map((r, idx) =>
                r.l ? (
                  <TreeRow key={idx} $l={1}>
                    <GuideV $x={11} />
                    <GuideV $x={30} $short={r.last} />
                    <GuideH $x={30} $w={11} />
                    {r.sel ? (
                      <>
                        <SelWrap>
                          <Ico n={r.i as string} s={15} />
                          <TreeName $sel>{r.t}<Hot>{r.k}</Hot></TreeName>
                        </SelWrap>
                        <Badge>
                          <svg width="15" height="14" viewBox="0 0 15 14"><rect x=".5" y=".5" width="14" height="13" fill="#dcebfa" stroke="#1f63b8" /><path d="M3 3h3v8H3zM9 3h3v8H9z" fill="none" stroke="#1f63b8" /></svg>
                          <NewTag>NEW</NewTag>
                        </Badge>
                      </>
                    ) : (
                      <>
                        <Ico n={r.i as string} s={15} />
                        <TreeName>{r.t}{r.k && <Hot>{r.k}</Hot>}</TreeName>
                      </>
                    )}
                  </TreeRow>
                ) : (
                  <TreeRow key={idx} $l={0}>
                    {r.open && <GuideV $x={11} $stub />}
                    <GuideH $x={18} $w={4} />
                    <Chev>
                      {r.open ? (
                        <ChevronDown size={12} strokeWidth={3} color="#444" />
                      ) : (
                        <ChevronRight size={12} strokeWidth={3} color="#aaa" />
                      )}
                    </Chev>
                    <FolderIcon><Folder open={r.open} /></FolderIcon>
                    <span>{r.t}</span>
                  </TreeRow>
                )
              )}
              <TreeRow $l={1}>
                <GuideV $x={11} />
                <Ico n="slab" s={15} />
                <TreeName>识别</TreeName>
                <Badge>
                  <svg width="15" height="14" viewBox="0 0 15 14"><rect x=".5" y=".5" width="14" height="13" fill="#dcebfa" stroke="#1f63b8" /></svg>
                  <NewTag>NEW</NewTag>
                </Badge>
              </TreeRow>
            </TreeList>
            <VBar $w={15}>
              <VEnd $h={45}><ChevronUp size={12} strokeWidth={3} /></VEnd>
              <VThumb $h={409} />
              <VEnd $bottom><ChevronDown size={12} strokeWidth={3} /></VEnd>
            </VBar>
          </TreeBox>
          <NavBtn $h={21}>单构件输入</NavBtn>
          <NavBtn $h={21}>报表预览</NavBtn>
        </Nav>

        <Right>
          <Row $h={27}>
            <Strip $w={791} $h={24}>
              <Handle $w={11} />
              <Tool i="eraser" t="删除" w={50} off />
              <Sep $w={6} />
              <Tool i="copy" t="复制" w={52} off />
              <Tool i="mirror" t="镜像" w={48} off />
              <Sep $w={9} />
              <Tool i="move" t="移动" w={51} off />
              <Tool i="spin" t="旋转" w={48} off />
              <Sep $w={9} />
              <Tool i="extend" t="延伸" w={50} off />
              <Tool i="trim" t="修剪" w={48} off />
              <Sep $w={10} />
              <Tool i="cut" t="打断" w={51} off />
              <Tool i="merge" t="合并" w={51} off />
              <Tool i="split" t="分割" w={46} off />
              <Sep $w={11} />
              <Tool i="align" t="对齐" w={44} off />
              <Arrow $w={10} />
              <Gap $w={5} />
              <Tool i="offset" t="偏移" w={52} off />
              <Tool i="stretch" t="拉伸" w={46} off />
              <Sep $w={10} />
              <Tool i="grip" t="设置夹点" w={68} off />
            </Strip>
          </Row>
          <Row $h={27}>
            <Strip $w={567}>
              <Handle $w={9} />
              <Combo $w={44}>首层</Combo>
              <Arrow $w={15} />
              <Combo $w={58}>自定义</Combo>
              <Arrow $w={12} />
              <Gap $w={2} />
              <Combo $w={58}>自定义线</Combo>
              <Arrow $w={12} />
              <Gap $w={3} />
              <Combo $w={57}>ZDYX-49</Combo>
              <Arrow $w={12} />
              <Sep $w={11} />
              <Tool i="prop" t="属性" w={48} />
              <Tool i="edit" t="编辑钢筋" w={75} on={1} />
              <Gap $w={4} />
              <Tool i="list" t="构件列表" w={74} />
              <Tool i="pick" t="拾取构件" w={70} />
            </Strip>
            <Strip $w={154} $ml={2}>
              <Handle $w={10} />
              <Tool i="twopt" t="两点" w={51} />
              <Tool i="para" t="平行" w={50} />
              <More>»</More>
            </Strip>
            <Strip $ml={4}>
              <Handle $w={7} />
              <Combo $w={45}>不偏移</Combo>
              <Arrow $w={14} />
              <Sep $w={6} />
              <Txt $w={19} $off>X=</Txt>
              <SpinInput $w={57}>0</SpinInput>
              <Txt $w={29} $off>&nbsp;mm</Txt>
              <Txt $w={18} $off>Y=</Txt>
              <SpinInput $w={58}>0</SpinInput>
              <Txt $w={25} $off>&nbsp;mm</Txt>
              <Sep $w={5} />
              <Check />
              <Txt $w={30}>旋转</Txt>
              <More>»</More>
            </Strip>
          </Row>
          <Row $h={28}>
            <Gap $w={413} />
            <Strip $w={7} $h={24}><Handle $w={7} /></Strip>
          </Row>
          <Row $h={28}>
            <Strip $w={488}>
              <Handle $w={10} />
              <Tool i="cursor" t="选择" w={48} />
              <Arrow $w={12} />
              <Sep $w={10} />
              <Tool i="line" t="直线" w={51} />
              <Tool i="plen" t="点加长度" w={75} />
              <Tool i="arc" t="三点画弧" w={70} />
              <Arrow $w={14} />
              <Gap $w={2} />
              <Combo $w={41} />
              <Arrow $w={14} />
              <Gap $w={4} />
              <Tool i="rect" t="矩形" w={45} />
              <Sep $w={10} />
              <Tool i="smart" t="智能布置" w={69} />
              <Arrow $w={11} />
            </Strip>
          </Row>

          <Canvas>
            <Drawing viewBox="243 194 1123 281">
              <polygon points="243,194 521,194 519,217 470,219 420,222 253,226 252,240 248,290 245,330 244,372 243,372" fill="#b3b300" />
              <polygon points="1030,200 1140,208 1121,475 1010,475" fill="#707070" />
              <polygon points="1140,208 1352,204 1333,475 1121,475" fill="#878787" />
              <polygon points="1036,199 1233,195 1352,204 1140,208" fill="#ababab" />
              <circle cx="804" cy="335" r="125" fill="none" stroke="#6e6e6e" />
              {[[929, 335], [804, 210], [804, 460], [679, 335]].map(([x, y]) => (
                <circle key={x * y} cx={x} cy={y} r="8" fill="none" stroke="#6e6e6e" />
              ))}
              <path d={vert.join("")} stroke="#9a8f88" strokeWidth="0.9" fill="none" />
              <path d={vertBold.join("")} stroke="#a39890" strokeWidth="1.300" fill="none" />
              <path d="M667 250L900 251M665 287L857 283M662 321L860 319M660 358L860 354M657 393L857 390M655 429L847 425" stroke="#a39890" strokeWidth="1.200" fill="none" />
              <path d="M675 216L905 215" stroke="#a39890" strokeWidth="3.500" fill="none" />
              <path d="M695 255L905 250" stroke="#a39890" strokeWidth="4" fill="none" />
              <path d="M650 454L853 450" stroke="#a39890" strokeWidth="2" fill="none" />
              <path d="M661 210L924 211L921 258L893 259L892 276L873 277L859 457L643 459Z" fill="none" stroke="#fff" strokeWidth="2" />
              <path d="M729 216L725 262M698 262L893 259M698 262L696 279M678 279L873 277M678 279L666 462M856 207L839 455" fill="none" stroke="#fff" strokeWidth="2" />
              <path d="M300 422L300 383" stroke="#0a78f0" strokeWidth="4" />
              <path d="M300 378l-4 10h8z" fill="#0a78f0" />
              <path d="M297 423L262 421" stroke="#0aff0a" strokeWidth="3" />
              <path d="M251 421l12-4v7z" fill="#0aff0a" />
              <path d="M299 425H310" stroke="#f00" strokeWidth="3" />
            </Drawing>
            <Panel>
              <PanelTitle>钢筋显示控制面板</PanelTitle>
              <PanelList>
                {["水平纵筋", "横向钢筋", "显示其它图元", "显示详细公式"].map((t) => (
                  <PanelItem key={t}>
                    <PanelCheck>
                      <svg width="9" height="9" viewBox="0 0 9 9"><path d="M1 4.500l2.500 2L8 2" fill="none" stroke="#444" strokeWidth="1.300" /></svg>
                    </PanelCheck>
                    {t}
                  </PanelItem>
                ))}
              </PanelList>
            </Panel>
          </Canvas>

          <Row $h={30} $pt={2}>
            <Gap $w={2} />
            <Strip $w={211} $h={25}>
              <Handle $w={9} />
              <Tool i="ortho" t="正交" w={46} />
              <Gap $w={2} />
              <Tool i="snap" t="对象捕捉" w={75} on={1} />
              <Tool i="dyn" t="动态输入" w={75} on={1} />
            </Strip>
            <Strip $w={262} $h={25}>
              <Handle $w={10} />
              <Tool i="cross" t="交点" w={47} />
              <Tool i="perp" t="垂点" w={51} on={1} />
              <Tool i="mid" t="中点" w={51} on={1} />
              <Gap $w={3} />
              <Tool i="apex" t="顶点" w={51} />
              <Tool i="coord" t="坐标" w={46} />
            </Strip>
          </Row>

          <Lower>
            <Gutter>
              <XBox><svg width="9" height="8" viewBox="0 0 9 8"><path d="M0 0l9 8M9 0L0 8" stroke="#555" /></svg></XBox>
              <Dots />
            </Gutter>
            <LowerMain>
              <RebarBar>
                <Tool i="first" w={24} />
                <Tool i="prev" w={23} />
                <Tool i="next" w={24} />
                <Tool i="last" w={19} />
                <Sep $w={6} />
                <Gap $w={2} />
                <Tool i="up" w={23} />
                <Tool i="down" w={21} />
                <Sep $w={6} />
                <Gap $w={2} />
                <Tool i="ins" t="插入" w={51} off />
                <Tool i="del" t="删除" w={52} off />
                <Tool i="scale" t="缩尺配筋" w={75} off />
                <Tool i="info" t="钢筋信息" w={75} />
                <Tool i="lib" t="钢筋图库" w={75} />
                <Tool i="other" t="其他" w={44} />
                <Arrow $w={10} />
                <Gap $w={7} />
                <Tool t="关闭" w={26} />
                <Sep $w={12} />
                <Txt $w={170}>单构件钢筋总重(kg)：57.218</Txt>
              </RebarBar>
              <Sheet>
                <SheetTop>
                  <Clip>
                    <Tbl>
                      <colgroup>
                        {colW.map((w, i) => <col key={i} width={w} />)}
                      </colgroup>
                      <thead>
                        <tr>
                          {heads.map((h, i) => (
                            <Th key={i} $hot={i === 2}>
                              {i === 2 ? <>直径<Hot>(mm)</Hot></> :
                               i === 8 ? <>长度<Hot>(mm)</Hot></> :
                               i === 11 ? <>损耗<Hot>(%)</Hot></> :
                               i === 12 ? <>单重<Hot>(kg)</Hot></> :
                               i === 13 ? <>总重<Hot>(kg)</Hot></> : h}
                            </Th>
                          ))}
                        </tr>
                      </thead>
                      <tbody>
                        {rows.map((r, i) => (
                          <Tr key={r.n} $h={r.h}>
                            <RowHead $cur={i === 0}>{r.n}</RowHead>
                            <Td>{r.name}<Num>{r.s}</Num></Td>
                            <Td $mark $sel={i === 0}><Num>{r.d}</Num></Td>
                            <Td $c>虫</Td>
                            <Td><Num>{r.fig}</Num></Td>
                            <Td>
                              {i === 0 ? (
                                <ShapeSvg viewBox="0 0 200 59">
                                  <path d="M101 18H93V21H101M101 16V49" fill="none" stroke="#000" strokeWidth="2.200" />
                                  <g fontFamily="Liberation Sans, sans-serif" fontSize="12" fill="#000">
                                    <text x="0" y="0" transform="translate(80,3) rotate(90)">200</text>
                                    <text x="0" y="0" transform="translate(105,15) rotate(90)">00</text>
                                    <text x="0" y="0" transform="translate(105,28) rotate(90)">1</text>
                                    <text x="90" y="33">27</text>
                                    <text x="101" y="33">3</text>
                                    <text x="114" y="25">20</text>
                                    <text x="95" y="59">66</text>
                                  </g>
                                </ShapeSvg>
                              ) : (
                                <Shape>
                                  <ShapeVal>{r.f}</ShapeVal>
                                  <ShapeBar />
                                </Shape>
                              )}
                            </Td>
                            <Td><Num>{r.f}</Num></Td>
                            <Td>净长</Td>
                            <Td><Num>{r.len}</Num></Td>
                            <Td><Num>{r.c}</Num></Td>
                            <Td><Num>0</Num></Td>
                            <Td><Num>0</Num></Td>
                            <Td><Num>{r.w}</Num></Td>
                            <Td><Num>{r.t}</Num></Td>
                            <Td>直筋</Td>
                          </Tr>
                        ))}
                      </tbody>
                    </Tbl>
                  </Clip>
                  <VBar $w={17}>
                    <VEnd $h={18}><ChevronUp size={12} strokeWidth={3} /></VEnd>
                    <VThumb $h={33} />
                    <VEnd $bottom><ChevronDown size={12} strokeWidth={3} /></VEnd>
                  </VBar>
                </SheetTop>
                <HBar>
                  <HEnd><ChevronLeft size={12} strokeWidth={3} /></HEnd>
                  <HThumb />
                  <HEnd $right><ChevronRight size={12} strokeWidth={3} /></HEnd>
                </HBar>
              </Sheet>
            </LowerMain>
          </Lower>
        </Right>
      </Body>

      <Status>
        <StatusCell $w={147}>X=167359 Y=45223</StatusCell>
        <StatusCell $w={77}><StatusCn>层高:</StatusCn>4.5m</StatusCell>
        <StatusCell $w={98}><StatusCn>底标高:</StatusCn>-0.03m</StatusCell>
        <StatusCell $w={47}>1(1)</StatusCell>
        <StatusCell />
        <StatusCell $w={70}>244.8 FPS</StatusCell>
      </Status>

      <Taskbar>
        <Start>
          <svg width="16" height="16" viewBox="0 0 16 16"><path d="M0 2.500l6.800-1v6H0zM7.800 1.300L16 0v7.500H7.800zM0 8.500h6.800v6l-6.800-1zM7.800 8.500H16V16l-8.200-1.200z" fill="#fff" /></svg>
        </Start>
        <Search>
          <Cortana />
          在这里输入你要搜索的内容
          <Mic>
            <svg width="12" height="20" viewBox="0 0 12 20"><rect x="3" y="1" width="6" height="11" rx="3" fill="none" stroke="#9a9a9a" /><path d="M1 9c0 6 10 6 10 0M6 15v3M3 18.500h6" fill="none" stroke="#9a9a9a" /></svg>
          </Mic>
        </Search>
        <Apps>
          <AppSlot>
            <svg width="22" height="24" viewBox="0 0 22 24"><g fill="#e8e8e8"><path d="M11 12C3 12 0 8 2 3c2-3 8-2 9 2z" /><path d="M11 12c8 0 11-4 9-9-2-3-8-2-9 2z" /><path d="M11 12c-8 0-11 4-9 9 2 3 8 2 9-2z" /><path d="M11 12c8 0 11 4 9 9-2 3-8 2-9-2z" /></g></svg>
          </AppSlot>
          <AppSlot>
            <svg width="28" height="26" viewBox="0 0 28 26"><path d="M15 8c-7-2-11 3-10 8 1 5 8 7 11 3 2-3 0-7-3-6-3 0-3 4-1 5" fill="none" stroke="#ddd" strokeWidth="1.600" /><path d="M21 1c3 0 4 3 4 7l2 3H15l2-3c0-4 1-7 4-7z" fill="#e89a10" /></svg>
          </AppSlot>
          <AppSlot>
            <svg width="24" height="24" viewBox="0 0 24 24"><path d="M2 13C2 5 8 1 14 1c6 0 9 5 8 12H8c0 4 3 6 7 6 3 0 5-1 7-2v4c-3 2-6 2-9 2C6 23 2 20 2 13zM8 9h8c0-3-1-4-4-4-2 0-4 1-4 4z" fill="#0a78d7" /></svg>
          </AppSlot>
          <AppSlot>
            <svg width="22" height="24" viewBox="0 0 22 24"><path d="M1 7h20v16H1z" fill="#fff" /><path d="M7 7V4c0-4 8-4 8 0v3" fill="none" stroke="#fff" strokeWidth="1.500" /><path d="M6 11h4v4H6zM11 11h4v4h-4zM6 16h4v4H6zM11 16h4v4h-4z" fill="#111" /></svg>
          </AppSlot>
          <AppSlot>
            <svg width="24" height="22" viewBox="0 0 24 22"><path d="M1 1h8l2 3h12v17H1z" fill="#f6cf6a" /><path d="M1 7h22v14H1z" fill="#fbe29a" /><path d="M8 13h9l2 8H6z" fill="#2a9ae8" /></svg>
          </AppSlot>
          <AppSlot $open>
            <svg width="26" height="26" viewBox="0 0 26 26"><path d="M22 3C14 0 3 5 3 14c0 8 9 11 15 8 5-3 5-10 0-11-4-1-7 2-6 5" fill="none" stroke="#1b9ae8" strokeWidth="4" /></svg>
          </AppSlot>
          <AppSlot $open>
            <svg width="24" height="24" viewBox="0 0 24 24"><rect x="1" y="1" width="22" height="22" rx="3" fill="#f0a020" /><path d="M5 5h12v15H5z" fill="#f8ecc8" stroke="#b87a20" /><path d="M7 9h8M7 12h8M7 15h6" stroke="#888" /><path d="M22 2L13 16" stroke="#a03a10" strokeWidth="2" /></svg>
          </AppSlot>
          <AppSlot $open>
            <svg width="22" height="26" viewBox="0 0 22 26"><rect x="1" y="10" width="10" height="14" fill="#eee" stroke="#888" /><path d="M3 14h6M3 17h6M3 20h6" stroke="#888" /><path d="M10 6c0-6 9-6 9 0 0 4-4 3-4 8M15 16v3" fill="none" stroke="#f7e318" strokeWidth="3" /></svg>
          </AppSlot>
          <AppSlot $open>
            <svg width="26" height="28" viewBox="0 0 26 28"><ellipse cx="13" cy="15" rx="11" ry="12" fill="#8ac83a" stroke="#d8e8c0" strokeWidth="1.500" /><circle cx="13" cy="15" r="6.500" fill="none" stroke="#fff" strokeWidth="2.500" /><path d="M7 15h12" stroke="#fff" strokeWidth="2" /><path d="M4 5c6-3 12-3 18-2" fill="none" stroke="#3a8a2a" strokeWidth="1.500" /></svg>
          </AppSlot>
          <AppSlot $open $active>
            <svg width="24" height="24" viewBox="0 0 24 24"><rect width="24" height="24" rx="4" fill="#1189ec" /><path d="M12 4v13M6 10c0 9 12 9 12 0M3 11h5M16 11h5" fill="none" stroke="#fff" strokeWidth="2" /></svg>
          </AppSlot>
        </Apps>
        <Tray>
          <CpuBlock>28%<br />CPU使用</CpuBlock>
          <TrayIcon $x={198}><svg width="14" height="9"><path d="M1 8l6-6 6 6" fill="none" stroke="#fff" strokeWidth="1.300" /></svg></TrayIcon>
          <TrayIcon $x={223}><svg width="16" height="12"><path d="M4 3h11v8H4z" fill="none" stroke="#fff" /><path d="M5 4h7v6H5zM0 3h3M1.500 1v4" fill="#ddd" stroke="#ddd" /></svg></TrayIcon>
          <TrayIcon $x={248}><svg width="16" height="14"><path d="M1 13c0-6 4-11 13-12M4 13c0-4 3-8 9-9M7 13c0-3 2-5 6-5" fill="none" stroke="#bbb" /></svg></TrayIcon>
          <TrayIcon $x={272}><svg width="16" height="14"><path d="M1 5h3l4-4v12l-4-4H1z" fill="none" stroke="#fff" /><path d="M10 4c2 2 2 4 0 6M13 2c3 3 3 7 0 10" fill="none" stroke="#ccc" /></svg></TrayIcon>
          <TrayIcon $x={293}>中</TrayIcon>
          <TrayIcon $x={322}><svg width="16" height="17"><rect width="16" height="17" rx="2" fill="#e8481c" transform="rotate(-6 8 8)" /><path d="M11.500 4C8 3 4.500 4 5 6.500S12 9 11.500 12 7 14 4 13" fill="none" stroke="#fff" strokeWidth="2" /></svg></TrayIcon>
          <Clock>19:21<br />2017/7/3</Clock>
          <TrayIcon $x={433}><svg width="16" height="16"><path d="M.5.5h15v11h-5l-2.500 3-2.500-3h-5z" fill="none" stroke="#fff" /></svg></TrayIcon>
        </Tray>
      </Taskbar>
    </Shell>
  );
}
